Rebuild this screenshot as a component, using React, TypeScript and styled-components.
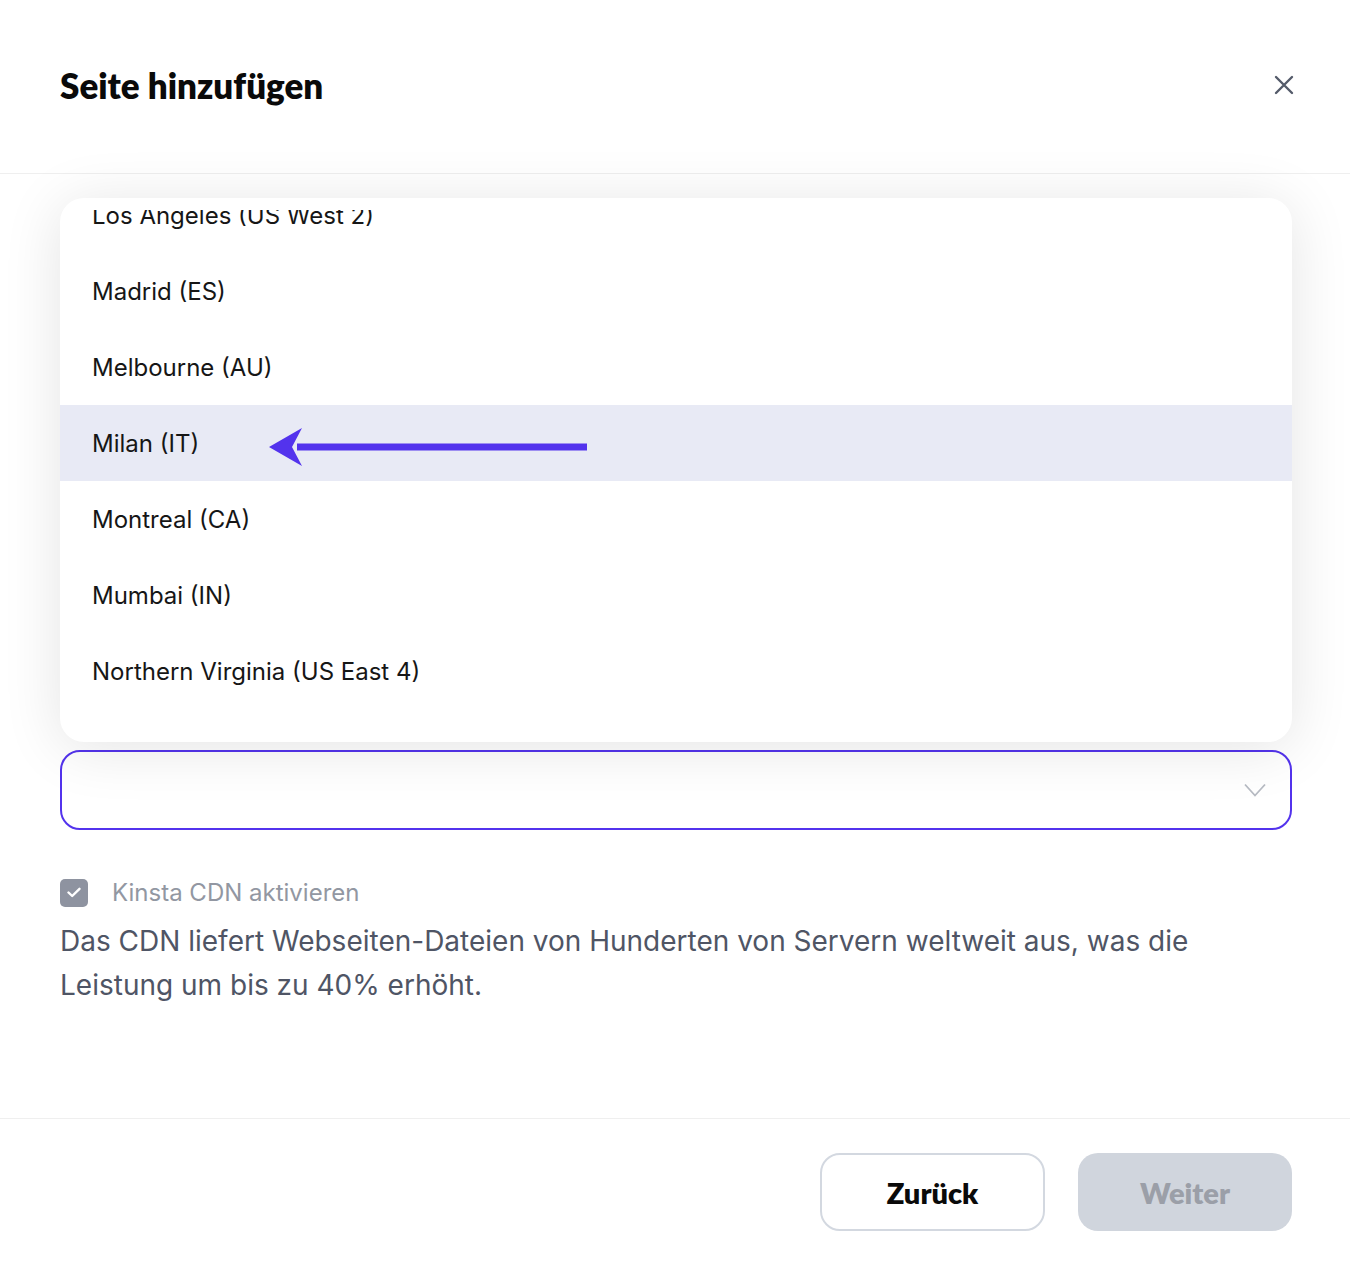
import React from "react";
import styled, { createGlobalStyle } from "styled-components";

const Global = createGlobalStyle`
  html, body { margin: 0; padding: 0; background: #ffffff; }
  body { font-family: Inter, "Noto Sans", sans-serif; }
  * { box-sizing: border-box; }
`;

const Page = styled.div`
  min-height: 100vh;
  display: flex;
  flex-direction: column;
  background: #fff;
`;

const Header = styled.header`
  height: 174px;
  padding: 0 52px 4px 60px;
  display: flex;
  align-items: center;
  justify-content: space-between;
  border-bottom: 1px solid #efefef;
`;

const Title = styled.h1`
  margin: 0;
  font-family: Lato, "Open Sans", sans-serif;
  font-weight: 800;
  font-size: 35px;
  color: #0a0a0a;
`;

const CloseButton = styled.button`
  border: none;
  background: none;
  padding: 0;
  width: 28px;
  height: 28px;
  display: flex;
  align-items: center;
  justify-content: center;
  cursor: pointer;
`;

const Body = styled.main`
  flex: 1;
  padding: 24px 58px 0 60px;
  display: flex;
  flex-direction: column;
`;

const Menu = styled.div`
  position: relative;
  z-index: 2;
  height: 544px;
  padding-top: 12px;
  border-radius: 24px;
  background: #fff;
  overflow: hidden;
  box-shadow: 0 6px 60px rgba(0, 0, 0, 0.11);
`;

const Viewport = styled.div`
  height: 100%;
  overflow: hidden;
`;

const List = styled.ul`
  list-style: none;
  margin: -33px 0 0 0;
  padding: 0 0 33px 0;
`;

const Item = styled.li<{ $active?: boolean }>`
  height: 76px;
  display: flex;
  align-items: center;
  gap: 70px;
  padding-left: 32px;
  font-size: 24px;
  color: #161616;
  background: ${(p) => (p.$active ? "#e8eaf5" : "transparent")};
`;

const Select = styled.div`
  margin-top: 8px;
  height: 80px;
  border: 2px solid #5333ed;
  border-radius: 20px;
  display: flex;
  align-items: center;
  justify-content: flex-end;
  padding-right: 24px;
  background: transparent;
`;

const CheckRow = styled.label`
  margin-top: 48px;
  display: flex;
  align-items: center;
  gap: 24px;
  font-size: 24px;
  color: #9297a2;
`;

const Checkbox = styled.span`
  width: 28px;
  height: 28px;
  border-radius: 5px;
  background: #8e93a0;
  display: flex;
  align-items: center;
  justify-content: center;
`;

const Description = styled.p`
  margin: 12px 0 0 0;
  font-size: 28px;
  line-height: 44px;
  color: #4f5565;
  max-width: 1180px;
`;

const Footer = styled.footer`
  height: 144px;
  border-top: 1px solid #efefef;
  display: flex;
  justify-content: flex-end;
  align-items: flex-start;
  padding: 34px 58px 0 0;
  gap: 33px;
`;

const Button = styled.button<{ $primary?: boolean }>`
  height: 78px;
  width: ${(p) => (p.$primary ? "214px" : "225px")};
  border-radius: 20px;
  font-family: Lato, "Open Sans", sans-serif;
  font-weight: 800;
  font-size: 29px;
  cursor: pointer;
  border: ${(p) => (p.$primary ? "none" : "2px solid #d3d8e0")};
  background: ${(p) => (p.$primary ? "#d0d5dd" : "#ffffff")};
  color: ${(p) => (p.$primary ? "#9b9fa8" : "#0a0a0a")};
`;

const cities = [
  "Los Angeles (US West 2)",
  "Madrid (ES)",
  "Melbourne (AU)",
  "Milan (IT)",
  "Montreal (CA)",
  "Mumbai (IN)",
  "Northern Virginia (US East 4)",
];

const Arrow = () => (
  <svg width="318" height="40" viewBox="0 0 318 40" style={{ marginTop: 8 }}>
    <path d="M318 16.5 L28 16.5 L28 23.5 L318 23.5 Z" fill="#5333ed" />
    <path d="M0 20 L33 1 L23 20 L33 39 Z" fill="#5333ed" />
  </svg>
);

export default function App() {
  return (
    <Page>
      <Global />
      <Header>
        <Title>Seite hinzufügen</Title>
        <CloseButton aria-label="Schließen">
          <svg width="22" height="22" viewBox="0 0 22 22">
            <path d="M3 3 L19 19 M19 3 L3 19" stroke="#545b6a" strokeWidth="2.4" strokeLinecap="round" />
          </svg>
        </CloseButton>
      </Header>
      <Body>
        <Menu>
          <Viewport>
            <List>
              {cities.map((c) => (
                <Item key={c} $active={c === "Milan (IT)"}>
                  <span>{c}</span>
                  {c === "Milan (IT)" && <Arrow />}
                </Item>
              ))}
            </List>
          </Viewport>
        </Menu>
        <Select>
          <svg width="22" height="14" viewBox="0 0 22 14">
            <path d="M1 1.5 L11 12.5 L21 1.5" stroke="#b7bbc3" strokeWidth="1.8" fill="none" />
          </svg>
        </Select>
        <CheckRow>
          <Checkbox>
            <svg width="14" height="11" viewBox="0 0 14 11">
              <path d="M1.5 5.5 L5.2 9 L12.5 1.8" stroke="#fff" strokeWidth="2.4" fill="none" strokeLinecap="round" strokeLinejoin="round" />
            </svg>
          </Checkbox>
          Kinsta CDN aktivieren
        </CheckRow>
        <Description>
          Das CDN liefert Webseiten-Dateien von Hunderten von Servern weltweit aus, was die Leistung um bis zu 40% erhöht.
        </Description>
      </Body>
      <Footer>
        <Button>Zurück</Button>
        <Button $primary>Weiter</Button>
      </Footer>
    </Page>
  );
}
